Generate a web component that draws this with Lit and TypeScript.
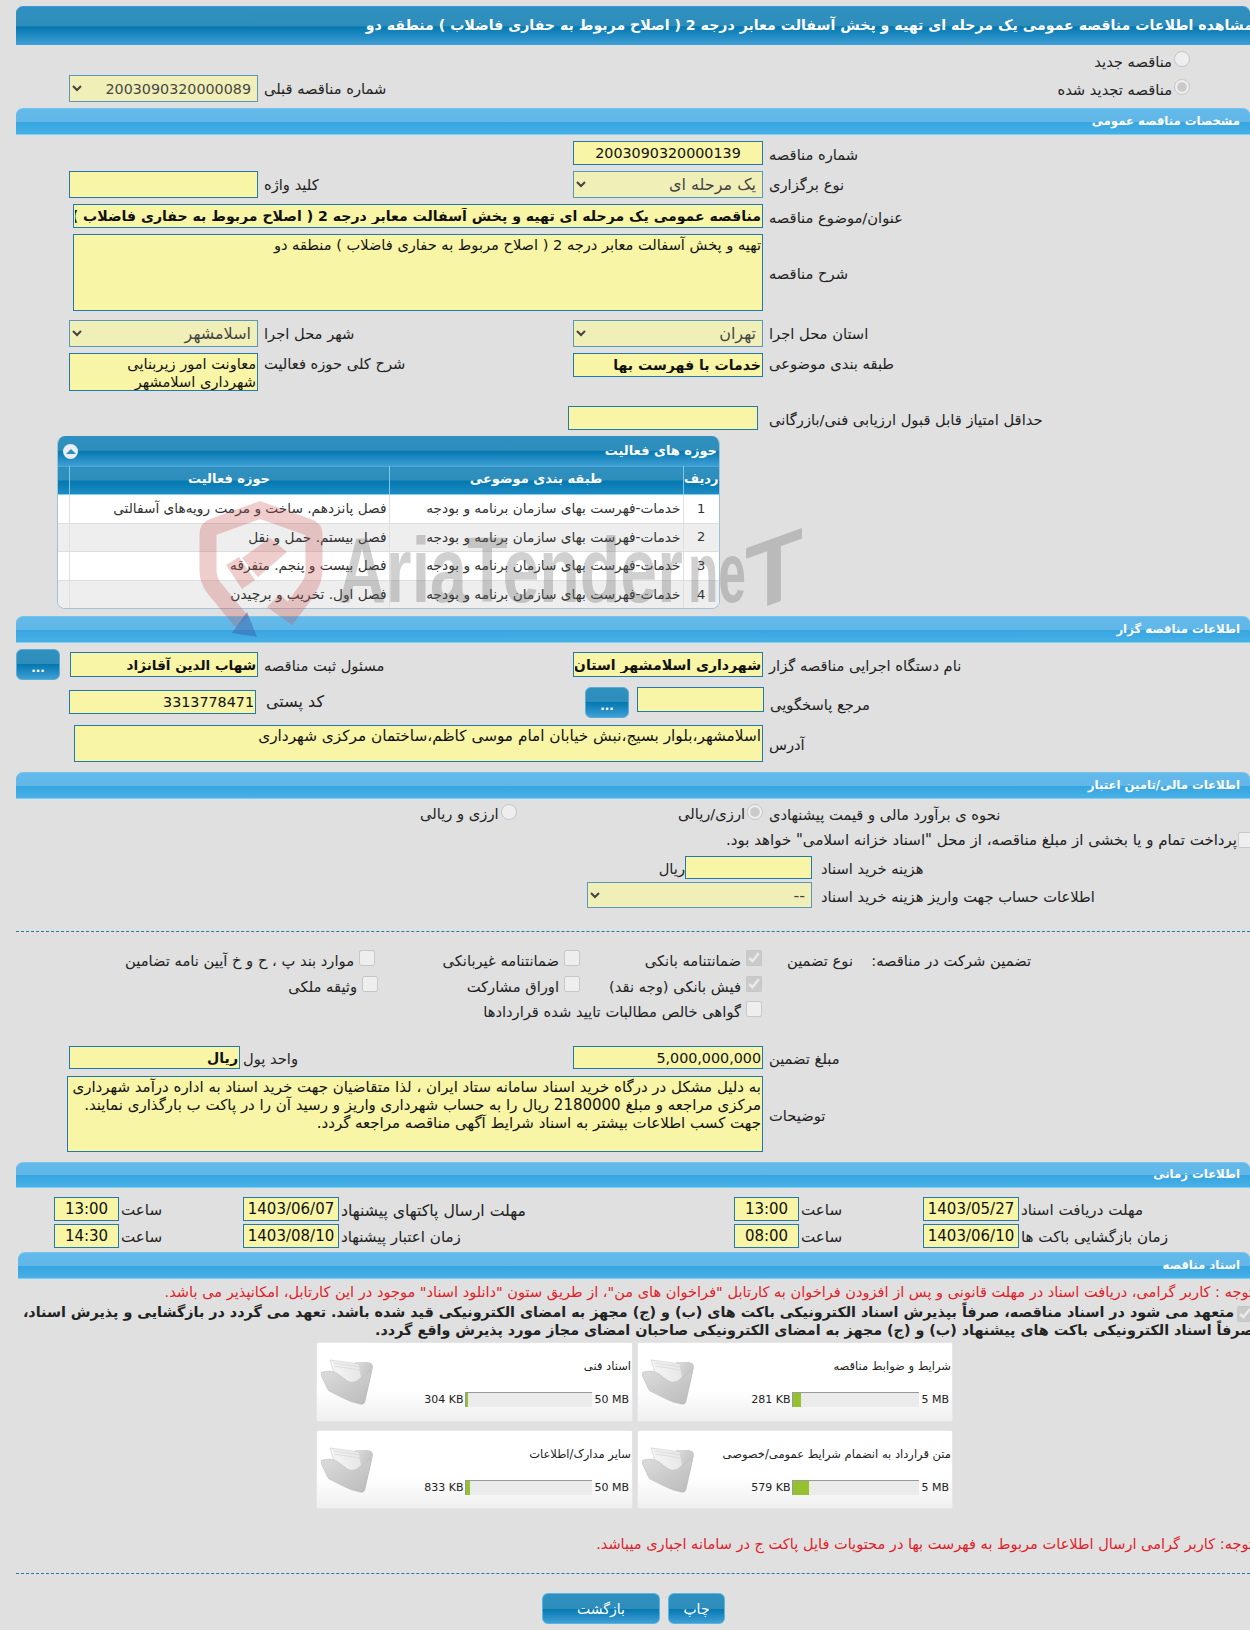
import { LitElement, html, css } from "lit";
import { customElement } from "lit/decorators.js";

const ACTIVITIES = [
  ["1", "خدمات-فهرست بهای سازمان برنامه و بودجه", "فصل پانزدهم. ساخت و مرمت رویه‌های آسفالتی"],
  ["2", "خدمات-فهرست بهای سازمان برنامه و بودجه", "فصل بیستم. حمل و نقل"],
  ["3", "خدمات-فهرست بهای سازمان برنامه و بودجه", "فصل بیست و پنجم. متفرقه"],
  ["4", "خدمات-فهرست بهای سازمان برنامه و بودجه", "فصل اول. تخریب و برچیدن"],
];

const DOCS = [
  { title: "شرایط و ضوابط مناقصه", used: "281 KB", max: "5 MB", pct: 6 },
  { title: "اسناد فنی", used: "304 KB", max: "50 MB", pct: 1.5 },
  { title: "متن قرارداد به انضمام شرایط عمومی/خصوصی", used: "579 KB", max: "5 MB", pct: 12.5 },
  { title: "سایر مدارک/اطلاعات", used: "833 KB", max: "50 MB", pct: 2.5 },
];

const folder = html`<svg class="folder" viewBox="0 0 52 46" aria-hidden="true">
  <defs>
    <linearGradient id="fa" x1="0" y1="0" x2="1" y2="1"><stop offset="0" stop-color="#dcdcdc"/><stop offset="1" stop-color="#b4b4b4"/></linearGradient>
    <linearGradient id="fb" x1="0" y1="0" x2="1" y2="1"><stop offset="0" stop-color="#dcdcdc"/><stop offset="1" stop-color="#bababa"/></linearGradient>
    <linearGradient id="fc" x1="0" y1="0" x2="1" y2="0"><stop offset="0" stop-color="#f6f6f6"/><stop offset="1" stop-color="#e6e6e6"/></linearGradient>
  </defs>
  <path d="M34 3 L47 3 Q52 4 52 8 L44 42 Q43 46 40 45 L36 40 Z" fill="url(#fa)"/>
  <path d="M9 1 L38 5 L41 22 L30 24 L13 14 Z" fill="url(#fc)" stroke="#d0d0d0" stroke-width=".7"/>
  <path d="M12 4 L39 8 M13 7 L39 11" stroke="#dcdcdc" stroke-width="1" fill="none"/>
  <path d="M1 13 L9 12 Q13 12 17 15 L26 22 Q30 25 36 22 L47 13 Q51 11 50 15 L44 42 Q43 46 39 45 L31 43 Q26 41 22 39 L10 33 Q7 32 6 29 L0 16 Q0 13 1 13 Z" fill="url(#fb)" stroke="#b8b8b8" stroke-width=".5"/>
</svg>`;

@customElement("app-root")
export class AppRoot extends LitElement {
  static styles = css`
    :host { display: block; width: 1250px; height: 1630px; background: #e0e0e0; overflow: hidden; position: relative;
      font-family: "DejaVu Sans", sans-serif; font-size: 14.7px; color: #222; }
    * { box-sizing: border-box; }
    .title { margin: 6px 0 0 16px; height: 39px; border-radius: 7px 7px 0 0; border-top: 1px solid #3b9be0; color: #fff; font-weight: bold; font-size: 14.15px;
      background: linear-gradient(#2f90bf 0, #2e8dbb 50%, #0478b0 52%, #3f9fd5 100%); display: flex; align-items: center; justify-content: flex-start; direction: rtl; white-space: nowrap; padding: 0 0 2px 0; }
    .title span { margin-right: -3px; }
    .bar { margin-left: 16px; height: 27px; border-radius: 7px 7px 0 0; border-top: 1px solid #74c6ef; border-bottom: 1px solid #7ed0f5; color: #fff; font-weight: bold; font-size: 11.7px;
      background: linear-gradient(#63b9e9 0, #61b8e8 50%, #36a5e0 52%, #48b0e6 100%); direction: rtl; display: flex; align-items: center; padding: 0 10px 2px 0; }
    .bar5 { margin-left: 18px; margin-top: 4px; }
    .b1 { margin-top: 6px; } .b2 { margin-top: 7px; } .b3 { margin-top: 10px; } .b4 { margin-top: 10px; height: 26px; }

    input[type="text"], textarea, select { font-family: "DejaVu Sans", sans-serif; font-size: 14.6px; direction: rtl; color: #111; background-color: #f8f6a6; border: 1px solid #2279ad; border-radius: 0; padding: 0 1px; margin: 0; display: block; outline: none; }
    textarea { resize: none; line-height: 18px; overflow: hidden; padding-top: 1px; }
    textarea.addr { font-size: 15.3px; }
    textarea.nt { font-size: 15px; }
    select { height: 100%; padding: 0 2px; font-size: 16px; color: #000; }
    input.num, select.num { font-size: 14.3px; }
    input.ctr { text-align: center; }
    input.b { font-weight: bold; font-size: 14.1px; }
    input.b.n { font-size: 13.6px; }
    input[type="radio"], input[type="checkbox"] { margin: 0; width: 16px; height: 16px; flex: none; }

    .lb { direction: rtl; white-space: nowrap; padding-top: 2px; }
    .row { display: grid; grid-template-columns: 504px 1fr; padding-left: 69px; margin-top: 6px; }
    .pair { display: flex; align-items: center; gap: 6px; height: 100%; min-width: 0; }
    .w190 { width: 190px; flex: none; height: 100%; } .w188 { width: 189px; flex: none; height: 100%; }
    .h24 { height: 24px; } .h27 { height: 27px; }
    .h27 .lb, .r-prev .lb { padding-top: 0; }
    .opt { direction: rtl; display: flex; align-items: flex-start; gap: 2px; white-space: nowrap; }
    .opt span { padding-top: 2px; }
    .r-new { height: 30px; padding: 6px 60px 0 0; display: flex; justify-content: flex-start; direction: rtl; }
    .r-prev { height: 27px; margin-top: 0; }
    .r-prev .opt { justify-self: end; padding-right: 60px; padding-top: 4px; }
    .full { display: flex; align-items: center; gap: 6px; padding-left: 74px; margin-top: 6px; }
    .full .ta { width: 689px; flex: none; height: 100%; }
    .full.wide { padding-left: 73px; }
    .full.wide .ta { width: 690px; }
    .h77 { height: 77px; } .mt9 { margin-top: 9px; } .h38 { height: 38px; }
    .h38 .pair { align-items: flex-start; }
    .h38 .tin { height: 24px; } .h38 .tarea { height: 38px; line-height: 18px; }
    .r-min { display: flex; align-items: center; padding-left: 568px; margin-top: 15px; height: 24px; }
    .r-min input { width: 190px; height: 100%; margin-right: 11px; }

    .panel { margin: 6px 0 0 57px; width: 663px; height: 173px; background: #fff; border: 1px solid #9cc3dc; border-top: 0; border-radius: 8px; overflow: hidden; direction: rtl; }
    .phead { height: 30px; position: relative; color: #fff; font-weight: bold; font-size: 13px; display: flex; align-items: center; padding: 0 2px 2px 0;
      background: linear-gradient(#2f90bf 0, #2e8dbb 48%, #0478b0 50%, #3f9fd5 100%); }
    .collapse { position: absolute; left: 5px; top: 8px; width: 15px; height: 15px; border-radius: 50%; background: #e8eef2; display: flex; align-items: center; justify-content: center; }
    .collapse i { width: 0; height: 0; border: 5px solid transparent; border-top: 0; border-bottom: 5px solid #2e8dbb; }
    table { border-collapse: collapse; width: 662px; table-layout: fixed; font-size: 13.7px; color: #333; }
    .c1 { width: 36px; } .c2 { width: 294px; } .c3 { width: 320px; } .c4 { width: 12px; }
    th { height: 28px; color: #fff; font-size: 13px; font-weight: bold; padding: 0 0 4px; border-left: 1px solid #7fc6e8; background: linear-gradient(#2f90bf 0, #2e8dbb 48%, #0478b0 50%, #1e8cc4 100%); border-top: 1px solid #52a6d0; border-bottom: 1px solid #7fd0f0; }
    th:last-child { border-left: 0; }
    td { height: 28.5px; padding: 0 2px 1px; border-left: 1px solid #e0e0e0; border-bottom: 1px solid #ddd; white-space: nowrap; }
    td:last-child { border-left: 0; }
    td:first-child { text-align: center; font-size: 13px; }
    tbody tr:nth-child(even) { background: #eee; }
    tbody tr:last-child td { border-bottom: 0; }

    .dots { width: 44px; height: 31px; flex: none; border: 1px solid #58acd6; border-radius: 6px; color: #fff; font-weight: bold; font-size: 12px; display: flex; align-items: flex-end; justify-content: center; padding: 0 0 4px; font-family: "DejaVu Sans", sans-serif;
      background: linear-gradient(#2f90bf 0, #2e8dbb 48%, #0478b0 50%, #3f9fd5 100%); }
    .h31 { height: 31px; margin-top: 7px; }
    .h31.first { margin-top: 6px; padding-left: 16px; grid-template-columns: 557px 1fr; }
    .h31.first .tin { height: 25px; }
    .h31.first .pair:first-child { gap: 0; }
    .h31.first .gapb { margin: 0 6px 0 10px; width: 188px; }
    .r-ref .ref { display: flex; align-items: flex-start; gap: 8px; margin-left: 12px; height: 100%; }
    .r-ref .ref input { width: 127px; height: 25px; }
    .r-ref .zip { width: 187px; height: 24px; flex: none; margin-top: 3px; }
    .r-ref .pair.zipp { align-items: flex-start; }
    .r-ref .zipp .lb { padding: 5px 0 0 4px; font-size: 16px; }
    .r-ref .lbr { align-self: center; padding-top: 3px; }
    .h37 { height: 37px; margin-top: 7px; }

    .r-money { display: grid; grid-template-columns: 258px 91px 1fr; padding-left: 420px; height: 29px; align-items: center; justify-items: start; }
    .inl { display: flex; gap: 2px; direction: rtl; align-items: flex-start; white-space: nowrap; }
    .inl input { margin-top: -1px; }
    .r-pay { display: flex; direction: rtl; height: 24px; align-items: center; white-space: nowrap; gap: 1px; margin-right: -4px; font-size: 15px; }
    .r-cost { display: flex; align-items: center; padding-left: 662px; margin-top: 4px; height: 23px; }
    .r-cost input { width: 127px; height: 100%; flex: none; }
    .r-cost .lb { margin-left: 9px; }
    .r-cost .lb.rial { width: 23px; flex: none; margin-left: 0; }
    .r-acc { display: flex; align-items: center; padding-left: 587px; margin-top: 3px; height: 26px; }
    .r-acc select { width: 225px; flex: none; }
    .r-acc .lb { margin-left: 9px; }
    hr { border: 0; border-top: 1px dashed #2279ad; margin: 23px 0 0 16px; }
    .guar { direction: rtl; display: grid; grid-template-columns: 178px 91px 182px 205px 1fr; grid-auto-rows: 25.5px; padding-right: 219px; margin-top: 16px; white-space: nowrap; align-items: start; }
    .chk { display: flex; gap: 5px; align-items: flex-start; }
    .chk input { margin-top: 2px; }
    .chk span, .guar > span { padding-top: 4px; }
    .g3 { grid-column: 3; }
    .nudge { margin-right: -3px; }
    .sp2 { grid-column: 3 / span 3; }
    .r-amt { height: 23px; margin-top: 21.5px; }
    .r-amt .unit { width: 171px; height: 100%; flex: none; }
    .r-amt .pair { gap: 3px; }
    .r-amt .pair + .pair { gap: 6px; }
    .notes { padding-left: 67px; margin-top: 7px; height: 76px; }
    .notes .ta { width: 696px; }

    .time { display: grid; grid-template-columns: 189px 491px 189px 1fr; padding-left: 54px; height: 24px; }
    .t1 { margin-top: 9px; } .t2 { margin-top: 3px; }
    .cell { display: flex; align-items: center; gap: 2px; height: 100%; }
    .cell .lb { font-size: 15.1px; }
    .cell .lb.wider { font-size: 15.7px; }
    .cell .tm { width: 65px; height: 100%; text-align: center; padding: 0; font-size: 15px; flex: none; }
    .cell .dt { width: 96px; height: 100%; text-align: center; padding: 0; font-size: 15px; flex: none; }

    .red { color: #e02028; direction: rtl; white-space: nowrap; margin-right: -3px; font-size: 14.55px; }
    .red1 { padding-top: 4px; height: 24px; }
    .commit { display: flex; direction: rtl; gap: 3px; margin-right: -3px; }
    .commit input { margin-top: 3px; }
    .commit b { font-size: 14.3px; line-height: 18px; white-space: nowrap; display: block; }
    .commit b + b { margin-right: -20px; }
    .cards { display: grid; grid-template-columns: 317px 316px; gap: 8px 4px; padding-left: 316px; margin-top: 3px; grid-auto-rows: 79.5px; }
    .card { background: linear-gradient(#fff 0, #fff 60%, #efefef 100%); border: 1px solid #e6e6e6; border-radius: 2px; display: flex; padding: 0 1px 0 4px; }
    .folder { width: 52px; height: 46px; flex: none; margin-top: 16px; }
    .info { flex: 1; min-width: 0; direction: rtl; font-size: 11.5px; color: #222; padding-top: 16px; }
    .info .name { height: 33px; white-space: nowrap; }
    .prog { display: flex; align-items: center; direction: ltr; justify-content: flex-end; gap: 2px; height: 15px; padding-right: 2px; font-size: 11px; }
    .track { width: 127px; height: 15px; background: #ebebeb; border-top: 1px solid #999; border-left: 1px solid #999; flex: none; }
    .fill { height: 100%; background: #96c12f; }
    .red2 { margin-top: 26px; height: 20px; }
    .hr2 { margin-top: 18px; }
    .btns { display: flex; gap: 8px; padding-left: 542px; margin-top: 19px; }
    .btn { height: 31px; border: 1px solid #58b4e0; border-radius: 6px; color: #fff; font-family: "DejaVu Sans", sans-serif; font-size: 14px; font-weight: normal; padding: 0;
      background: linear-gradient(#2f90bf 0, #2e8dbb 50%, #0478b0 52%, #3f9fd5 100%); }
    .btn.back { width: 118px; } .btn.print { width: 57px; }

    .mark { position: absolute; left: 190px; top: 490px; width: 630px; height: 160px; pointer-events: none; }
    .mark text { font-family: "Liberation Sans", sans-serif; font-weight: bold; fill: rgba(100,100,100,.3); }
  `;

  render() {
    return html`
      <div class="title"><span>مشاهده اطلاعات مناقصه عمومی یک مرحله ای تهیه و پخش آسفالت معابر درجه 2 ( اصلاح مربوط به حفاری فاضلاب ) منطقه دو</span></div>

      <div class="r-new"><label class="opt"><input type="radio" disabled /><span>مناقصه جدید</span></label></div>
      <div class="row r-prev">
        <div class="pair">
          <select class="w188 num" disabled><option>2003090320000089</option></select>
          <span class="lb">شماره مناقصه قبلی</span>
        </div>
        <label class="opt"><input type="radio" checked disabled /><span>مناقصه تجدید شده</span></label>
      </div>

      <div class="bar b1">مشخصات مناقصه عمومی</div>

      <div class="row h24">
        <span></span>
        <div class="pair"><input type="text" class="w190 num ctr" readonly .value=${"2003090320000139"} /><span class="lb">شماره مناقصه</span></div>
      </div>
      <div class="row h27">
        <div class="pair"><input type="text" class="w188" readonly /><span class="lb">کلید واژه</span></div>
        <div class="pair"><select class="w190" disabled><option>یک مرحله ای</option></select><span class="lb">نوع برگزاری</span></div>
      </div>
      <div class="full wide h24">
        <input type="text" class="ta b" readonly .value=${"مناقصه عمومی یک مرحله ای تهیه و پخش آسفالت معابر درجه 2 ( اصلاح مربوط به حفاری فاضلاب ) منطقه دو"} />
        <span class="lb">عنوان/موضوع مناقصه</span>
      </div>
      <div class="full wide h77">
        <textarea class="ta" readonly .value=${"تهیه و پخش آسفالت معابر درجه 2 ( اصلاح مربوط به حفاری فاضلاب ) منطقه دو"}></textarea>
        <span class="lb">شرح مناقصه</span>
      </div>
      <div class="row h27 mt9">
        <div class="pair"><select class="w188" disabled><option>اسلامشهر</option></select><span class="lb">شهر محل اجرا</span></div>
        <div class="pair"><select class="w190" disabled><option>تهران</option></select><span class="lb">استان محل اجرا</span></div>
      </div>
      <div class="row h38">
        <div class="pair"><textarea class="w188 tarea" readonly .value=${"معاونت امور زیربنایی شهرداری اسلامشهر"}></textarea><span class="lb">شرح کلی حوزه فعالیت</span></div>
        <div class="pair"><input type="text" class="w190 tin b" readonly .value=${"خدمات با فهرست بها"} /><span class="lb">طبقه بندی موضوعی</span></div>
      </div>
      <div class="r-min"><input type="text" readonly /><span class="lb">حداقل امتیاز قابل قبول ارزیابی فنی/بازرگانی</span></div>

      <div class="panel">
        <div class="phead">حوزه های فعالیت<span class="collapse"><i></i></span></div>
        <table>
          <colgroup><col class="c1" /><col class="c2" /><col class="c3" /><col class="c4" /></colgroup>
          <thead><tr><th>ردیف</th><th>طبقه بندی موضوعی</th><th>حوزه فعالیت</th><th></th></tr></thead>
          <tbody>
            ${ACTIVITIES.map((r) => html`<tr><td>${r[0]}</td><td>${r[1]}</td><td>${r[2]}</td><td></td></tr>`)}
          </tbody>
        </table>
      </div>

      <div class="bar b2">اطلاعات مناقصه گزار</div>

      <div class="row h31 first">
        <div class="pair">
          <button class="dots">...</button>
          <input type="text" class="w188 tin b n gapb" readonly .value=${"شهاب الدین آقانژاد"} />
          <span class="lb">مسئول ثبت مناقصه</span>
        </div>
        <div class="pair"><input type="text" class="w190 tin b" readonly .value=${"شهرداری اسلامشهر استان تهران"} /><span class="lb">نام دستگاه اجرایی مناقصه گزار</span></div>
      </div>
      <div class="row h31 r-ref">
        <div class="pair zipp"><input type="text" class="zip num" readonly .value=${"3313778471"} /><span class="lb">کد پستی</span></div>
        <div class="pair">
          <div class="ref"><button class="dots">...</button><input type="text" readonly /></div>
          <span class="lb lbr">مرجع پاسخگویی</span>
        </div>
      </div>
      <div class="full h37">
        <textarea class="ta addr" readonly .value=${"اسلامشهر،بلوار بسیج،نبش خیابان امام موسی کاظم،ساختمان مرکزی شهرداری"}></textarea>
        <span class="lb">آدرس</span>
      </div>

      <div class="bar b3">اطلاعات مالی/تامین اعتبار</div>

      <div class="r-money">
        <label class="inl"><input type="radio" disabled /><span>ارزی و ریالی</span></label>
        <label class="inl"><input type="radio" checked disabled /><span>ارزی/ریالی</span></label>
        <span class="lb">نحوه ی برآورد مالی و قیمت پیشنهادی</span>
      </div>
      <div class="r-pay"><input type="checkbox" disabled /><span>پرداخت تمام و یا بخشی از مبلغ مناقصه، از محل "اسناد خزانه اسلامی" خواهد بود.</span></div>
      <div class="r-cost"><span class="lb rial">ریال</span><input type="text" readonly /><span class="lb">هزینه خرید اسناد</span></div>
      <div class="r-acc"><select disabled><option>--</option></select><span class="lb">اطلاعات حساب جهت واریز هزینه خرید اسناد</span></div>

      <hr />

      <div class="guar">
        <span>تضمین شرکت در مناقصه:</span>
        <span>نوع تضمین</span>
        <label class="chk"><input type="checkbox" checked disabled /><span>ضمانتنامه بانکی</span></label>
        <label class="chk"><input type="checkbox" disabled /><span>ضمانتنامه غیربانکی</span></label>
        <label class="chk"><input type="checkbox" disabled /><span>موارد بند پ ، ح و خ آیین نامه تضامین</span></label>
        <label class="chk g3"><input type="checkbox" checked disabled /><span>فیش بانکی (وجه نقد)</span></label>
        <label class="chk"><input type="checkbox" disabled /><span>اوراق مشارکت</span></label>
        <label class="chk nudge"><input type="checkbox" disabled /><span>وثیقه ملکی</span></label>
        <label class="chk sp2"><input type="checkbox" disabled /><span>گواهی خالص مطالبات تایید شده قراردادها</span></label>
      </div>

      <div class="row r-amt">
        <div class="pair"><input type="text" class="unit b" readonly .value=${"ریال"} /><span class="lb">واحد پول</span></div>
        <div class="pair"><input type="text" class="w190 num" readonly .value=${"5,000,000,000"} /><span class="lb">مبلغ تضمین</span></div>
      </div>
      <div class="full notes">
        <textarea class="ta nt" readonly .value=${"به دلیل مشکل در درگاه خرید اسناد سامانه ستاد ایران ، لذا متقاضیان جهت خرید اسناد به اداره درآمد شهرداری مرکزی مراجعه و مبلغ 2180000 ریال را به حساب شهرداری واریز و رسید آن را در پاکت ب بارگذاری نمایند.\nجهت کسب اطلاعات بیشتر به اسناد شرایط آگهی مناقصه مراجعه گردد."}></textarea>
        <span class="lb">توضیحات</span>
      </div>

      <div class="bar b4">اطلاعات زمانی</div>

      <div class="time t1">
        <div class="cell"><input type="text" class="tm" readonly .value=${"13:00"} /><span class="lb">ساعت</span></div>
        <div class="cell"><input type="text" class="dt" readonly .value=${"1403/06/07"} /><span class="lb wider">مهلت ارسال پاکتهای پیشنهاد</span></div>
        <div class="cell"><input type="text" class="tm" readonly .value=${"13:00"} /><span class="lb">ساعت</span></div>
        <div class="cell"><input type="text" class="dt" readonly .value=${"1403/05/27"} /><span class="lb">مهلت دریافت اسناد</span></div>
      </div>
      <div class="time t2">
        <div class="cell"><input type="text" class="tm" readonly .value=${"14:30"} /><span class="lb">ساعت</span></div>
        <div class="cell"><input type="text" class="dt" readonly .value=${"1403/08/10"} /><span class="lb">زمان اعتبار پیشنهاد</span></div>
        <div class="cell"><input type="text" class="tm" readonly .value=${"08:00"} /><span class="lb">ساعت</span></div>
        <div class="cell"><input type="text" class="dt" readonly .value=${"1403/06/10"} /><span class="lb">زمان بازگشایی باکت ها</span></div>
      </div>

      <div class="bar bar5">اسناد مناقصه</div>

      <div class="red red1">توجه : کاربر گرامی، دریافت اسناد در مهلت قانونی و پس از افزودن فراخوان به کارتابل "فراخوان های من"، از طریق ستون "دانلود اسناد" موجود در این کارتابل، امکانپذیر می باشد.</div>
      <div class="commit">
        <input type="checkbox" checked disabled />
        <div>
          <b>متعهد می شود در اسناد مناقصه، صرفاً بپذیرش اسناد الکترونیکی باکت های (ب) و (ج) مجهز به امضای الکترونیکی قید شده باشد. تعهد می گردد در بازگشایی و پذیرش اسناد،</b>
          <b>صرفاً اسناد الکترونیکی باکت های پیشنهاد (ب) و (ج) مجهز به امضای الکترونیکی صاحبان امضای مجاز مورد پذیرش واقع گردد.</b>
        </div>
      </div>

      <div class="cards">
        ${[DOCS[1], DOCS[0], DOCS[3], DOCS[2]].map(
          (d) => html`<div class="card">
            ${folder}
            <div class="info">
              <div class="name">${d.title}</div>
              <div class="prog">
                <span>${d.used}</span>
                <div class="track"><div class="fill" style="width:${d.pct}%"></div></div>
                <span>${d.max}</span>
              </div>
            </div>
          </div>`
        )}
      </div>

      <div class="red red2">توجه: کاربر گرامی ارسال اطلاعات مربوط به فهرست بها در محتویات فایل پاکت ج در سامانه اجباری میباشد.</div>
      <hr class="hr2" />
      <div class="btns">
        <button class="btn back">بازگشت</button>
        <button class="btn print">چاپ</button>
      </div>

      <svg class="mark" viewBox="0 0 630 160" aria-hidden="true">
        <g opacity=".28">
          <path fill="none" stroke="#c85050" stroke-width="17" d="M52 132 L24 98 Q18 90 18 80 L18 44 Q18 39 23 37 L70 20 L118 37 Q124 39 124 44 L124 80 Q124 90 118 98 L102 120"/>
          <path fill="#c85050" d="M109 104 L126 104 L102 135 L77 117 L90 104 L100 114 Z"/>
          <path fill="#c85050" d="M36 75 L49 67 L65 90 L52 99 Z M52 68 L80 48 L97 62 L68 87 Z"/>
        </g>
        <path fill="rgba(60,100,170,.5)" d="M57 122 L67 147 L42 143 Z"/>
        <text x="148" y="112" font-size="93" textLength="345" lengthAdjust="spacingAndGlyphs">AriaTender</text>
        <text x="498" y="112" font-size="86" textLength="58" lengthAdjust="spacingAndGlyphs">ne</text>
        <text transform="translate(555 124) skewY(-20)" font-size="95" textLength="58" lengthAdjust="spacingAndGlyphs">T</text>
      </svg>
    `;
  }
}
